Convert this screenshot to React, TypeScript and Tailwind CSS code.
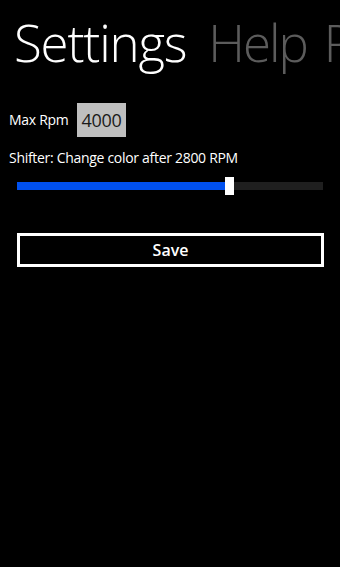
export default function App() {
  return (
    <div className="w-[340px] h-[567px] bg-black overflow-hidden text-white font-['Open_Sans','Noto_Sans',sans-serif]">
      <div className="flex whitespace-nowrap pl-[14px] pt-[11px] text-[51px] font-light leading-[62px] tracking-[-1.2px]">
        <span className="text-white">Settings</span>
        <span className="ml-[22px] text-[#5c5c5c] tracking-[-2px]">Help</span>
        <span className="ml-[17px] text-[#5c5c5c]">Rpm</span>
      </div>

      <div className="flex items-center gap-[9px] pl-[9px] mt-[30px]">
        <span className="w-[59px] text-[14px] leading-[20px] tracking-[-0.3px] whitespace-nowrap">Max Rpm</span>
        <div className="w-[49px] h-[34px] bg-[#bfbfbf] flex items-center justify-center text-[18px] text-[#1a1a1a] tracking-[-0.3px]">
          4000
        </div>
      </div>

      <div className="pl-[9px] mt-[11px] text-[14px] leading-[20px] tracking-[-0.3px]">Shifter: Change color after 2800 RPM</div>

      <div className="flex items-center mx-[17px] mt-[9px] h-[18px]">
        <div className="w-[208px] h-[8px] bg-[#0050ef]" />
        <div className="w-[9px] h-[18px] bg-white" />
        <div className="flex-1 h-[8px] bg-[#1f1f1f]" />
      </div>

      <button className="ml-[17px] mt-[38px] w-[307px] h-[34px] border-[3px] border-white flex items-center justify-center text-[16px] font-semibold">
        Save
      </button>
    </div>
  );
}
